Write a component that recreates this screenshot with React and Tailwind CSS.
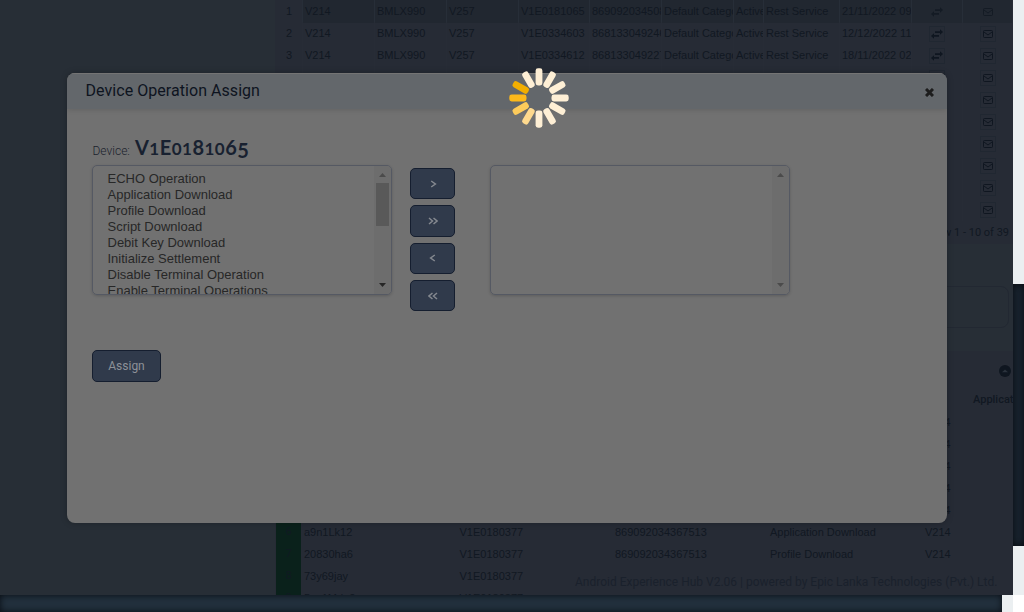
import React from "react";

const topRows = [
  ["V214", "BMLX990", "V257", "V1E0181065", "869092034508", "Default Category", "Active", "Rest Service", "21/11/2022 09"],
  ["V214", "BMLX990", "V257", "V1E0334603", "868133049246", "Default Category", "Active", "Rest Service", "12/12/2022 11"],
  ["V214", "BMLX990", "V257", "V1E0334612", "868133049227", "Default Category", "Active", "Rest Service", "18/11/2022 02"],
  [], [], [], [], [], [], [],
];

const bottomRows = [
  [], [], [], [], [],
  ["a9n1Lk12", "V1E0180377", "869092034367513", "Application Download"],
  ["20830ha6", "V1E0180377", "869092034367513", "Profile Download"],
  ["73y69jay", "V1E0180377", "", ""],
  ["5ya1Mda2", "V1E0180377", "", ""],
];

const operations = [
  "ECHO Operation",
  "Application Download",
  "Profile Download",
  "Script Download",
  "Debit Key Download",
  "Initialize Settlement",
  "Disable Terminal Operation",
  "Enable Terminal Operations",
];

const spokes = [
  "#feefd5", "#feefd5", "#feefd5", "#feefd5", "#feefd5", "#feefd5",
  "#feefd5", "#fed98e", "#fdcb5b", "#fdb91b", "#f2ae00", "#feefd5",
];

function Mail() {
  return (
    <svg width="10" height="8" viewBox="0 0 10 8" fill="none" stroke="#0f1620">
      <rect x="0.5" y="0.5" width="9" height="7" rx="1" />
      <path d="M1 2l4 3 4-3" />
    </svg>
  );
}

function Swap() {
  return (
    <svg width="12" height="10" viewBox="0 0 12 10" fill="#0f1620">
      <path d="M4 2.2H9V0.2l3 2.8-3 2.8V3.9H4zM8 6.1H3V4.2L0 7l3 2.8V7.8h5z" />
    </svg>
  );
}

function IconCell({ selected, children }) {
  return (
    <div className={`flex h-4 w-4 items-center justify-center ${selected ? "opacity-70" : "border border-[#202731]"}`}>
      {children}
    </div>
  );
}

function TopTable() {
  return (
    <div>
      {topRows.map((row, i) => (
        <div
          key={i}
          className="grid h-[22px] grid-cols-[27px_72px_72px_72px_71px_72px_72px_30px_76px_72px_51px_50px] items-stretch leading-[23px]"
        >
          <div className="pr-2.5 text-right">{i + 1}</div>
          {Array.from({ length: 9 }, (_, c) => (
            <div
              key={c}
              className={`overflow-hidden whitespace-nowrap border-l pl-[2px] ${i === 0 ? "border-[#272e38] bg-[#212730]" : "border-[#272c36]"}`}
            >
              {row[c]}
            </div>
          ))}
          <div className={`flex items-center justify-center border-l ${i === 0 ? "border-[#272e38] bg-[#212730]" : "border-[#272c36]"}`}>
            <IconCell selected={i === 0}><Swap /></IconCell>
          </div>
          <div className={`flex items-center justify-center border-l ${i === 0 ? "border-[#272e38] bg-[#212730]" : "border-[#272c36]"}`}>
            <IconCell selected={i === 0}><Mail /></IconCell>
          </div>
        </div>
      ))}
    </div>
  );
}

function BottomTable() {
  return (
    <div>
      {bottomRows.map((row, i) => (
        <div key={i} className="grid h-[22px] grid-cols-[26px_155.5px_155.5px_155px_156px_89px] leading-[22px]">
          <div className="ml-px border-b border-[#2b3440] bg-[#0a211b] text-center font-['Roboto',sans-serif] text-[#101a22]">{i + 1}</div>
          {[0, 1, 2, 3].map((c) => (
            <div key={c} className="overflow-hidden whitespace-nowrap pl-[3px]">{row[c]}</div>
          ))}
          <div className="pl-[2px]">{i < 7 ? "V214" : ""}</div>
        </div>
      ))}
    </div>
  );
}

function Background() {
  return (
    <div className="flex h-[595px] w-[1013px] overflow-hidden bg-[#272e36] font-['Liberation_Sans',sans-serif] text-[11px] text-[#111822]">
      <div className="w-[275px] shrink-0" />
      <div className="flex w-[738px] shrink-0 flex-col">
        <div className="bg-[#262b35]">
          <TopTable />
          <div className="h-[24px] pr-[4px] text-right font-['Roboto',sans-serif] leading-[25px]">View 1 - 10 of 39</div>
        </div>
        <div className="mt-[42px] mr-[4px] h-[42px] shrink-0 rounded-lg border border-[#222832]" />
        <div className="mt-[23px] h-[244px] shrink-0 bg-[#262b35]">
          <div className="flex h-[38px] items-center justify-end pt-[2px] pr-[2px]">
            <svg width="12" height="12" viewBox="0 0 12 12">
              <circle cx="6" cy="6" r="6" fill="#0f1620" />
              <path d="M3 7.3L6 4.5l3 2.8z" fill="#2b333d" />
            </svg>
          </div>
          <div className="h-[22px] overflow-hidden pl-[698px] font-['Roboto',sans-serif] font-medium leading-[22px] whitespace-nowrap">Application</div>
          <BottomTable />
        </div>
      </div>
    </div>
  );
}

function Scrollbar({ thumb }) {
  return (
    <div className="flex w-[17px] shrink-0 flex-col items-center bg-[#6d6d6d]">
      <svg className="mt-[7px]" width="7" height="4" viewBox="0 0 7 4"><path d="M0 4L3.5 0 7 4z" fill="#4b4b4b" /></svg>
      <div className={`mt-[6px] h-[43px] w-[13px] ${thumb ? "bg-[#595959]" : ""}`} />
      <svg className="mt-auto mb-[7px]" width="7" height="4" viewBox="0 0 7 4"><path d="M0 0L3.5 4 7 0z" fill={thumb ? "#262626" : "#4b4b4b"} /></svg>
    </div>
  );
}

function ListBox({ items, thumb }) {
  return (
    <div className="flex h-[130px] w-[300px] overflow-hidden rounded-[5px] border border-[#555963] shadow-[0_1px_3px_rgba(0,0,0,0.18)]">
      <div className="flex-1 overflow-hidden pt-[5px] pl-[14.5px] text-[13px] leading-[16px] text-[#272727]">
        {items.map((t) => <div key={t} className="whitespace-nowrap">{t}</div>)}
      </div>
      <Scrollbar thumb={thumb} />
    </div>
  );
}

function MoveButton({ double, left }) {
  return (
    <button className="flex h-[31.3px] w-[45px] items-center justify-center rounded-[5px] border border-[#151e2f] bg-[#303a4b]">
      <svg className={left ? "rotate-180" : ""} width="10" height="8" viewBox="0 0 10 8" fill="none" stroke="#84888f" strokeWidth="1.5">
        {double ? <path d="M1 1l3.5 3L1 7M5.5 1L9 4 5.5 7" /> : <path d="M3.2 1l4.2 3-4.2 3" />}
      </svg>
    </button>
  );
}

function DeviceSerial() {
  return (
    <span className="relative -top-[0.5px] ml-[5px] font-['Lato',sans-serif] text-[20px] font-bold tracking-[0.5px] text-[#182130]">
      V<span className="text-[17px]">1</span>E<span className="text-[17px]">01</span>8<span className="text-[17px]">10</span>6<span className="relative top-[3px]">5</span>
    </span>
  );
}

function Modal() {
  return (
    <div className="absolute top-[73px] left-[67px] flex h-[450px] w-[880px] flex-col overflow-hidden rounded-lg bg-[#717171] font-['Liberation_Sans',sans-serif] shadow-[0_0_6px_rgba(0,0,0,0.25)]">
      <div className="flex h-[36px] shrink-0 items-center justify-between border-t border-[#747474] bg-[#63676b] pr-[13px] pl-[18.5px] shadow-[0_1px_5px_rgba(0,0,0,0.13)]">
        <div className="-mt-[2px] font-['Roboto',sans-serif] text-[16px] leading-[18px] tracking-[0.05px] text-[#0e141f]">Device Operation Assign</div>
        <svg className="mt-[2px]" width="9" height="9" viewBox="0 0 9 9" stroke="#1d1d1d" strokeWidth="3"><path d="M1 1l7 7M8 1L1 8" /></svg>
      </div>
      <div className="flex flex-1 flex-col pl-[25px]">
        <div className="mt-[23px] flex h-[33px] items-baseline pl-[0.5px] leading-[30px]">
          <span className="font-['Roboto',sans-serif] text-[12px] font-light text-[#1b222d]">Device:</span>
          <DeviceSerial />
        </div>
        <div className="flex">
          <ListBox items={operations} thumb />
          <div className="mt-[3px] mr-[35px] ml-[18px] flex w-[45px] flex-col gap-[6px]">
            <MoveButton />
            <MoveButton double />
            <MoveButton left />
            <MoveButton double left />
          </div>
          <ListBox items={[]} />
        </div>
        <button className="mt-[39px] h-[32px] w-[69px] rounded-[5px] border border-[#151e2f] bg-[#303a4b] font-['Roboto',sans-serif] text-[12px] text-[#8d9198]">Assign</button>
      </div>
    </div>
  );
}

function Spinner() {
  return (
    <svg className="absolute top-[68px] left-[509px]" width="60" height="60" viewBox="-30 -30 60 60">
      {spokes.map((c, i) => (
        <rect key={i} x="-3.4" y="-29.7" width="6.8" height="17.2" rx="2.4" fill={c} transform={`rotate(${i * 30})`} />
      ))}
    </svg>
  );
}

export default function App() {
  return (
    <div className="relative flex h-[612px] w-[1024px] flex-col overflow-hidden bg-white">
      <div className="flex h-[595px]">
        <Background />
        <div className="flex w-[11px] flex-col bg-[#ebeff1]">
          <div className="mt-[284px] h-[262px] bg-[#1b2733] shadow-[inset_0_0_8px_#05080c]" />
        </div>
      </div>
      <div className="flex h-[17px]">
        <div className="w-[1002px] bg-[#22303d] shadow-[inset_0_0_7px_#080d13]" />
        <div className="w-[11px] bg-[#ebeff1]" />
      </div>
      <div className="absolute top-[574px] left-[575px] font-['Roboto',sans-serif] text-[12px] leading-[16px] whitespace-nowrap text-[#1a212c]">
        Android Experience Hub V2.06 | powered by Epic Lanka Technologies (Pvt.) Ltd.
      </div>
      <Modal />
      <Spinner />
    </div>
  );
}
